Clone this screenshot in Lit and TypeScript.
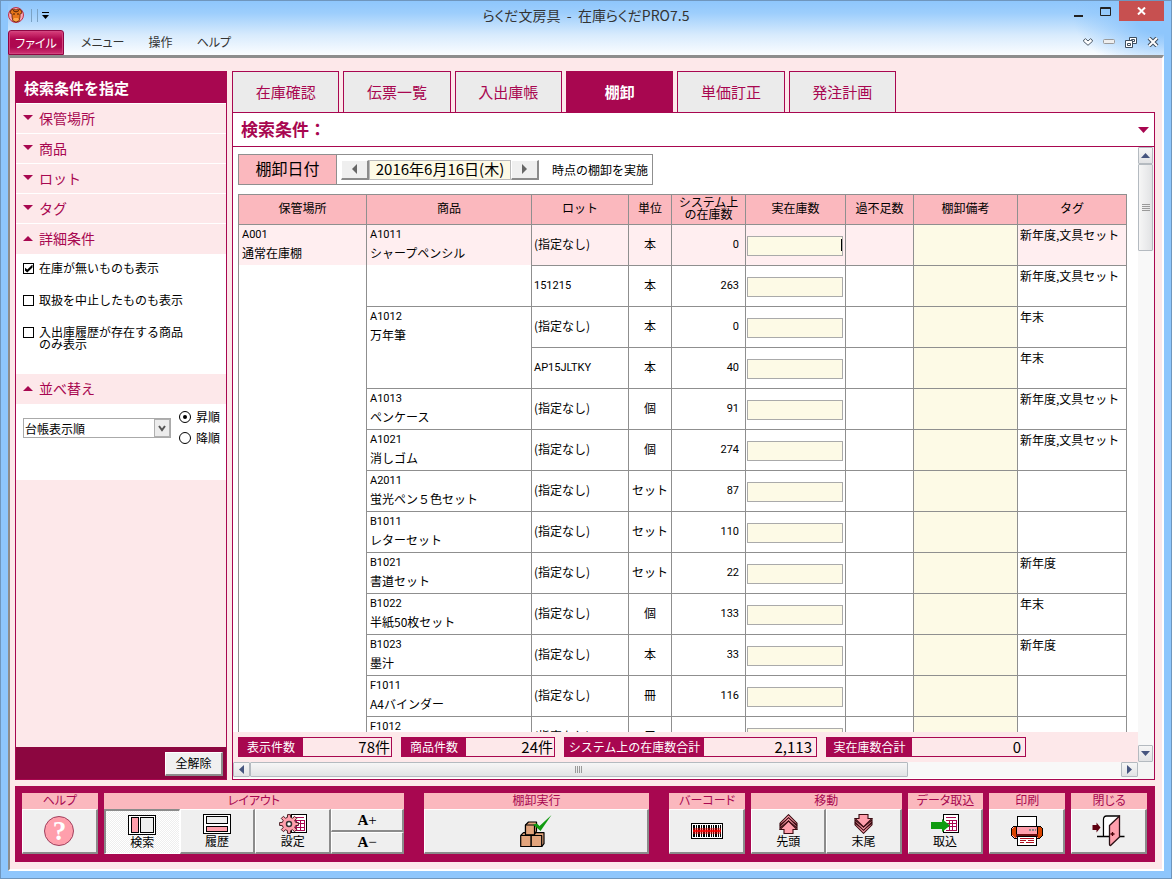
import { LitElement, html, css, svg, nothing } from "lit";
import { customElement, property } from "lit/decorators.js";
import { classMap } from "lit/directives/class-map.js";

interface StockRow { lot: string; unit: string; system: string; tag: string; }
interface Product { code: string; name: string; rows: StockRow[]; }

const NO_LOT = "(指定なし)";
const SET_TAG = "新年度,文具セット";
const one = (code: string, name: string, unit: string, system: string, tag = ""): Product =>
  ({ code, name, rows: [{ lot: NO_LOT, unit, system, tag }] });

const PRODUCTS: Product[] = [
  { code: "A1011", name: "シャープペンシル", rows: [
    { lot: NO_LOT, unit: "本", system: "0", tag: SET_TAG },
    { lot: "151215", unit: "本", system: "263", tag: SET_TAG } ] },
  { code: "A1012", name: "万年筆", rows: [
    { lot: NO_LOT, unit: "本", system: "0", tag: "年末" },
    { lot: "AP15JLTKY", unit: "本", system: "40", tag: "年末" } ] },
  one("A1013", "ペンケース", "個", "91", SET_TAG),
  one("A1021", "消しゴム", "個", "274", SET_TAG),
  one("A2011", "蛍光ペン５色セット", "セット", "87"),
  one("B1011", "レターセット", "セット", "110"),
  one("B1021", "書道セット", "セット", "22", "新年度"),
  one("B1022", "半紙50枚セット", "個", "133", "年末"),
  one("B1023", "墨汁", "本", "33", "新年度"),
  one("F1011", "A4バインダー", "冊", "116"),
  one("F1012", "", "冊", ""),
];

const reset = css`
  :host, * { box-sizing: border-box; }
  button, input, select { font: inherit; color: inherit; margin: 0; padding: 0; border: 0; border-radius: 0; background: none; }
  button { cursor: pointer; }
  svg { display: block; flex: none; }
`;

/* ---------- icons ---------- */
const gearPath = (() => {
  const teeth = 8, pts: string[] = [];
  const at = (r: number, turn: number) => {
    const a = turn * Math.PI * 2 / teeth;
    pts.push(`${(10 + r * Math.cos(a)).toFixed(2)} ${(10 + r * Math.sin(a)).toFixed(2)}`);
  };
  for (let i = 0; i < teeth; i++) { at(6.8, i - 0.3); at(9.5, i - 0.2); at(9.5, i + 0.2); at(6.8, i + 0.3); }
  return `M${pts.join("L")}z`;
})();
const icons: Record<string, unknown> = {
  search: svg`<svg width="28" height="20" viewBox="0 0 28 20" shape-rendering="crispEdges">
    <rect x=".5" y=".5" width="27" height="19" fill="#fff" stroke="#000"/>
    <rect x="3.5" y="2.5" width="7" height="15" fill="#ff9fac" stroke="#000"/>
    <rect x="12.5" y="2.5" width="13" height="15" fill="#efefef" stroke="#000"/></svg>`,
  history: svg`<svg width="28" height="20" viewBox="0 0 28 20" shape-rendering="crispEdges">
    <rect x=".5" y=".5" width="27" height="19" fill="#fff" stroke="#000"/>
    <rect x="3.5" y="2.5" width="21" height="7" fill="#efefef" stroke="#000"/>
    <rect x="3.5" y="12.5" width="21" height="5" fill="#ff9fac" stroke="#000"/></svg>`,
  settings: svg`<svg width="28" height="20" viewBox="0 0 28 20">
    <g shape-rendering="crispEdges"><rect x="12.5" y=".5" width="15" height="18" fill="#fff" stroke="#000"/>
    <path d="M14 3.5h11M14 6.5h11v10h-11M14 9.5h11M14 13.5h11M17.5 6v11M21.5 6v11" fill="none" stroke="#a80750"/></g>
    <path d=${gearPath} fill="#ff9fac" stroke="#4a1c22"/>
    <circle cx="10" cy="10" r="2.5" fill="#fff" stroke="#333" stroke-width="1.500"/></svg>`,
  boxes: svg`<svg width="32" height="32" viewBox="0 0 32 32">
    <g fill="#e2a47c" stroke="#000" stroke-width="1.200" stroke-linejoin="round">
    <path d="M.7 20.500l2.800-2.800h20.500v11l-2.300 2.800"/>
    <rect x=".7" y="20.500" width="10.500" height="11"/><rect x="11.200" y="20.500" width="10.500" height="11"/>
    <path d="M5.500 10l3-3h8v9l-2 3.500h-9z"/><rect x="5.500" y="10" width="9" height="9.800"/></g>
    <path d="M13 9.500l4-1 2.500 2.500 12-11-11 16z" fill="#109b10"/></svg>`,
  barcode: svg`<svg width="32" height="16" viewBox="0 0 32 16" shape-rendering="crispEdges">
    <rect x=".5" y=".5" width="31" height="15" fill="#fff" stroke="#000"/>
    <path d="M2 2h2v12h-2zM5 2h1v12h-1zM7 2h2v12h-2zM10 2h1v12h-1zM12 2h2v12h-2zM15 2h1v12h-1zM17 2h2v12h-2zM20 2h1v12h-1zM22 2h1v12h-1zM24 2h2v12h-2zM27 2h1v12h-1zM29 2h1v12h-1z"/>
    <rect x="2" y="5" width="28" height="6" fill="#f00" opacity=".45"/><rect x="2" y="7" width="28" height="2" fill="#f00" opacity=".8"/></svg>`,
  first: svg`<svg width="19" height="20" viewBox="0 0 19 20"><g fill="#ff9fac" stroke="#3a0a10" stroke-width="1.100">
    <path d="M9.500.7L18 9.200v1.800L9.500 4.500 1 11v-1.800z"/><path d="M9.500 3.700L18 12v2L9.500 7 1 14v-2z"/>
    <path d="M9.500 7L18 15.500h-4v4h-9v-4h-4z"/></g></svg>`,
  last: svg`<svg width="19" height="20" viewBox="0 0 19 20"><g fill="#ff9fac" stroke="#3a0a10" stroke-width="1.100">
    <path d="M9.500 19.300L18 10.800v-1.800L9.500 15.500 1 9v1.800z"/><path d="M9.500 16.300L18 8v-2L9.500 13 1 6v2z"/>
    <path d="M9.500 13L18 4.500h-4v-4h-9v4h-4z"/></g></svg>`,
  load: svg`<svg width="28" height="20" viewBox="0 0 28 20" shape-rendering="crispEdges">
    <rect x="12.500" y=".5" width="15" height="18" fill="#fff" stroke="#000"/>
    <path d="M15 3.500h10M15 6.500h10v9.500h-10M15 9.500h10M15 12.500h10M18.500 6v10M21.500 6v10" fill="none" stroke="#a80750"/>
    <path d="M0 8h11v-3l8 6.500-8 6.500v-3h-11z" fill="#109b10" shape-rendering="auto"/></svg>`,
  print: svg`<svg width="32" height="30" viewBox="0 0 32 30" shape-rendering="crispEdges">
    <path d="M6.500 10.500v-10h19v10z" fill="#fff" stroke="#000"/>
    <path d="M2.500 10.500h27l2 2v7l-3 3h-25l-3-3v-7z" fill="#ff9fac" stroke="#000"/>
    <path d="M1 13l2-2h2v11h-1l-3-3zM31 13l-2-2h-2v11h1l3-3z" fill="#d94400"/>
    <path d="M5.500 11v10M26.500 11v10" stroke="#000"/><path d="M18 13.500h2M21 13.500h2M24 13.500h1" stroke="#888" stroke-width="2"/>
    <path d="M5 18h22v3h-22z" fill="#6b0d10"/>
    <path d="M6.500 20.500h19v9h-19z" fill="#fff" stroke="#000"/>
    <path d="M9 22.500h14M9 24.500h6M17 24.500h6M9 26.500h4M15 26.500h8" stroke="#b01020"/></svg>`,
  door: svg`<svg width="33" height="32" viewBox="0 0 33 32">
    <path d="M11.500 22V4.500q0-3.500 3-3.500h13" fill="#fff" stroke="#000" stroke-width="1.300"/>
    <path d="M12.500 4.500q0-2.500 2-2.500h11l-7.500 8v12h-5.500z" fill="#fff"/>
    <path d="M5 21.500h13M27 21.500h5.500" stroke="#000" stroke-width="1.300"/>
    <path d="M17.500 10.500L27.500 1v21L18.500 30.500q-1 0-1-1z" fill="#ff9fac" stroke="#2a1014" stroke-width="1.300"/>
    <path d="M20.500 17v4M18.500 19h4" stroke="#4a0008" stroke-width="1.300"/>
    <path d="M.5 10h4V7.500l4 5-4 5V15h-4z" fill="#5e0010"/></svg>`,
  mascot: svg`<svg width="16" height="16" viewBox="0 0 16 16">
    <circle cx="8" cy="8" r="7.500" fill="#f9a8b4" stroke="#c0304a"/>
    <path d="M3 3l3-1 2 1 2-1 3 1 1 3-2 1v3l-1 4-3 1-3-1-1-4V7L2 6z" fill="#e8761a" stroke="#5a2206" stroke-width=".8"/>
    <path d="M5 3.500l3 1.500 3-1.500M5 7h2M9 7h2" fill="none" stroke="#4a1a04"/><path d="M6 11h4l1 2-3 1.500-3-1.500z" fill="#ffa64a"/></svg>`,
};

const tri = (dir: "up" | "down" | "left" | "right", w: number, h: number, fill: string) => {
  const d = { up: `M0 ${h}L${w / 2} 0L${w} ${h}z`, down: `M0 0H${w}L${w / 2} ${h}z`,
    left: `M${w} 0V${h}L0 ${h / 2}z`, right: `M0 0L${w} ${h / 2}L0 ${h}z` }[dir];
  return html`<svg width=${w} height=${h} viewBox="0 0 ${w} ${h}"><path d=${d} fill=${fill}></path></svg>`;
};

/* ---------- title bar and menu ---------- */
@customElement("title-bar")
class TitleBar extends LitElement {
  static styles = [reset, css`
    :host { display: block; color: #333; }
    .title { display: grid; grid-template-columns: 1fr auto 1fr; height: 28px; }
    .quick { display: flex; align-items: center; gap: 3px; }
    .bars { width: 7px; height: 13px; border: solid #7ba2c4; border-width: 0 1px; margin: 0 1px 0 4px; }
    .more { display: flex; flex-direction: column; gap: 2px; align-items: center; border-top: 1px solid #000; padding-top: 2px; width: 7px; }
    .name { margin: 0; padding-top: 2px; font-size: 14px; font-weight: 400; line-height: 24px; font-feature-settings: "palt"; white-space: pre; }
    .win { display: flex; justify-content: flex-end; align-items: flex-start; }
    .win button { display: grid; place-items: center; width: 27px; height: 20px; }
    .win .close { width: 45px; background: #c75050; }
    .menu { display: flex; align-items: stretch; height: 26px; font-size: 12px; }
    .menu button { font-feature-settings: "palt"; line-height: 24px; padding: 0 12px; }
    .menu .file { color: #fff; width: 56px; padding: 0; height: 25px; margin-top: 1px; border: 1px solid #8f0543; border-radius: 3px 3px 0 0;
      background: linear-gradient(#d8407c, #b0084f 35%, #ad0850 70%, #cf3373); box-shadow: inset 0 0 0 1px #d2457f; }
    .menu nav { display: flex; padding-left: 5px; }
    .mdi { margin-left: auto; display: flex; align-items: center; gap: 10px; padding-right: 5px; }
    .mdi button { padding: 0; }
  `];
  render() {
    return html`
      <div class="title">
        <div class="quick">${icons.mascot}<span class="bars"></span><button class="more" aria-label="クイックアクセス">${tri("down", 7, 4, "#000")}</button></div>
        <h1 class="name">らくだ文房具  -  在庫らくだPRO7.5</h1>
        <div class="win">
          <button aria-label="最小化"><svg width="9" height="11"><path d="M0 9h9v2H0z" fill="#222"/></svg></button>
          <button aria-label="最大化"><svg width="11" height="9"><path d="M.5.5h10v8H.5zM0 1.500h11" fill="none" stroke="#222"/></svg></button>
          <button class="close" aria-label="閉じる"><svg width="9" height="8"><path d="M1 .5l7 7M8 .5l-7 7" stroke="#fff" stroke-width="2"/></svg></button>
        </div>
      </div>
      <div class="menu">
        <button class="file">ファイル</button>
        <nav><button>メニュー</button><button>操作</button><button>ヘルプ</button></nav>
        <div class="mdi">
          <button aria-label="リボン"><svg width="10" height="8"><path d="M.7 2L2.500.700 5 3 7.500.700 9.300 2v1.500L5 7.300.700 3.500z" fill="#fff" stroke="#4d5a68"/></svg></button>
          <button aria-label="ウィンドウ最小化"><svg width="12" height="6"><rect x=".5" y=".5" width="11" height="4" rx="1" fill="#eee" stroke="#999"/></svg></button>
          <button aria-label="元に戻す"><svg width="12" height="11"><path d="M4.500.500h7v6h-7zM6.500 2.500h3v2h-3z" fill="#fff" stroke="#3f4e5e"/><path d="M.500 3.500h7v7h-7zM2.500 6.500h3v2h-3z" fill="#fff" stroke="#3f4e5e"/></svg></button>
          <button aria-label="ウィンドウを閉じる"><svg width="12" height="10"><path d="M2 1l8 8M10 1l-8 8" stroke="#3f4e5e" stroke-width="4"/><path d="M2 1l8 8M10 1l-8 8" stroke="#fff" stroke-width="2"/></svg></button>
        </div>
      </div>`;
  }
}

/* ---------- search conditions ---------- */
@customElement("search-panel")
class SearchPanel extends LitElement {
  static styles = [reset, css`
    :host { display: flex; flex-direction: column; border: 1px solid #a80750; background: #fde8ea; font-size: 12px; }
    h2 { margin: 0; padding-left: 8px; background: #a80750; color: #fff; font-size: 15px; line-height: 31px; }
    .head { display: flex; align-items: center; gap: 6px; width: 100%; height: 30px; padding: 0 0 2px 7px; border-top: 1px solid #fff; color: #a80750; font-size: 14px; line-height: 20px; }
    .head[aria-expanded="true"] { height: 31px; }
    .block { background: #fff; padding: 0 6px 0 7px; }
    .checks { display: flex; flex-direction: column; gap: 19px; height: 119px; padding-top: 7px; }
    .checks label { display: flex; align-items: flex-start; gap: 5px; line-height: 12px; }
    .checks span { padding-top: 1px; }
    .checks input { appearance: none; flex: none; display: grid; width: 11px; height: 11px; margin-top: 2px; border: 1px solid #000; background: #fff; }
    .checks input:checked::after { content: ""; width: 8px; height: 8px; background: #000; place-self: center;
      clip-path: polygon(0 35%, 35% 62%, 100% 0, 100% 38%, 35% 100%, 0 72%); }
    .sort { display: flex; gap: 8px; height: 76px; padding-top: 4px; }
    .pick { position: relative; flex: 1; height: 20px; margin-top: 10px; }
    .pick select { appearance: none; width: 100%; height: 20px; border: 1px solid #aaa; background: #fff; padding-left: 1px; }
    .drop { position: absolute; top: 1px; right: 1px; bottom: 1px; width: 16px; display: grid; place-items: center; border: 1px solid #b0b0b0; background: #ececec; pointer-events: none; }
    .order { display: flex; flex-direction: column; gap: 3px; border: 0; margin: 0; padding: 0; width: 41px; }
    .order label { display: flex; align-items: center; gap: 5px; line-height: 18px; white-space: nowrap; }
    .order input { appearance: none; flex: none; display: grid; width: 12px; height: 12px; border: 1px solid #000; border-radius: 6px; }
    .order input:checked::after { content: ""; width: 4px; height: 4px; border-radius: 2px; background: #000; place-self: center; }
    .foot { margin-top: auto; background: #8c0640; display: flex; justify-content: flex-end; padding: 5px 3px 3px; }
    .clear { width: 58px; height: 24px; padding-bottom: 2px; line-height: 18px; background: #f0f0f0; border: 1px solid #fff; border-right: 2px solid #8b8b8b; border-bottom: 2px solid #8b8b8b; }
  `];
  render() {
    const head = (name: string, open = false) => html`<button class="head" aria-expanded=${open}>${tri(open ? "up" : "down", 10, 5, "#a80750")}${name}</button>`;
    return html`
      <h2>検索条件を指定</h2>
      ${head("保管場所")}${head("商品")}${head("ロット")}${head("タグ")}${head("詳細条件", true)}
      <div class="block checks">
        <label><input type="checkbox" checked><span>在庫が無いものも表示</span></label>
        <label><input type="checkbox"><span>取扱を中止したものも表示</span></label>
        <label><input type="checkbox"><span>入出庫履歴が存在する商品<br>のみ表示</span></label>
      </div>
      ${head("並べ替え", true)}
      <div class="block sort">
        <div class="pick"><select aria-label="並べ替え"><option>台帳表示順</option></select>
          <span class="drop"><svg width="8" height="7"><path d="M1 1l3 4 3-4" fill="none" stroke="#555" stroke-width="2"/></svg></span></div>
        <fieldset class="order">
          <label><input type="radio" name="order" checked>昇順</label>
          <label><input type="radio" name="order">降順</label>
        </fieldset>
      </div>
      <div class="foot"><button class="clear">全解除</button></div>`;
  }
}

/* ---------- scroll bars ---------- */
@customElement("scroll-rail")
class ScrollRail extends LitElement {
  @property({ type: Boolean, reflect: true }) vertical = false;
  @property({ type: Number }) share = 50;
  static styles = [reset, css`
    :host { display: flex; height: 16px; background: #f8f8f8; }
    :host([vertical]) { flex-direction: column; width: 16px; height: auto; }
    .track { flex: 1; display: flex; }
    :host([vertical]) .track { flex-direction: column; }
    .step, .thumb { display: grid; place-items: center; border: 1px solid #b4bac0; border-radius: 1px; background: linear-gradient(#f6f6f6, #e2e3e5); }
    .step { flex: none; width: 17px; height: 15px; }
    :host([vertical]) .step { width: 15px; height: 17px; }
    .thumb { height: 15px; }
    :host([vertical]) .thumb { width: 15px; height: auto; background: linear-gradient(90deg, #f6f6f6, #e2e3e5); }
  `];
  render() {
    const v = this.vertical;
    return html`
      <button class="step" aria-label=${v ? "上へ" : "左へ"}>${v ? tri("up", 9, 5, "#46557f") : tri("left", 5, 9, "#46557f")}</button>
      <div class="track"><div class="thumb" style="flex-basis:${this.share}%">
        ${v ? html`<svg width="8" height="7"><path d="M0 .500h8M0 2.500h8M0 4.500h8M0 6.500h8" stroke="#9a9a9a"/></svg>`
            : html`<svg width="7" height="7"><path d="M.500 0v7M2.500 0v7M4.500 0v7M6.500 0v7" stroke="#9a9a9a"/></svg>`}
      </div></div>
      <button class="step" aria-label=${v ? "下へ" : "右へ"}>${v ? tri("down", 9, 5, "#46557f") : tri("right", 5, 9, "#46557f")}</button>`;
  }
}

/* ---------- stock table ---------- */
@customElement("stock-table")
class StockTable extends LitElement {
  static styles = [reset, css`
    :host { display: block; }
    table { border-collapse: collapse; table-layout: fixed; width: 888px; font-size: 12px; }
    th, td { border: 1px solid #8f8f8f; padding: 0 0 2px; line-height: 16px; }
    th { height: 30px; padding-bottom: 3px; background: #fbb8be; font-weight: 400; line-height: 12px; }
    tbody tr { height: 41px; }
    .top { vertical-align: top; padding: 0; background: #fff; }
    .lines { height: 40px; padding: 1px 0 0 3px; line-height: 18px; white-space: nowrap; }
    .lines span { display: block; }
    .now { background: #ffeef0; }
    .tag { vertical-align: top; padding: 1px 0 0 2px; line-height: 18px; white-space: nowrap; }
    .lot { padding-left: 2px; }
    .unit { text-align: center; }
    .num { text-align: right; padding: 0 6px 0 0; }
    .num, .code { font-family: Roboto, sans-serif; font-size: 11px; }
    .memo { background: #fdfae6; }
    .field { position: relative; margin: 3px 2px 0 1px; }
    .field input { display: block; width: 100%; height: 20px; border: 1px solid #aaa; background: #fdfae6; text-align: right; }
    .caret { position: absolute; right: 1px; top: 3px; width: 1px; height: 12px; background: #000; }
  `];
  render() {
    const cols = [128, 165, 97, 43, 74, 100, 68, 104, 109];
    const total = PRODUCTS.reduce((n, p) => n + p.rows.length, 0);
    let line = 0;
    return html`<table>
      <colgroup>${cols.map(w => html`<col style="width:${w}px">`)}</colgroup>
      <thead><tr><th>保管場所</th><th>商品</th><th>ロット</th><th>単位</th><th>システム上<br>の在庫数</th><th>実在庫数</th><th>過不足数</th><th>棚卸備考</th><th>タグ</th></tr></thead>
      <tbody>${PRODUCTS.map(p => p.rows.map((r, i) => {
        const first = line++ === 0;
        const lines = classMap({ lines: true, now: first });
        return html`<tr class=${classMap({ now: first })}>
          ${first ? html`<td class="top" rowspan=${total}><div class=${lines}><span class="code">A001</span><span>通常在庫棚</span></div></td>` : nothing}
          ${i === 0 ? html`<td class="top" rowspan=${p.rows.length}><div class=${lines}><span class="code">${p.code}</span><span>${p.name}</span></div></td>` : nothing}
          <td class="lot"><span class=${classMap({ code: r.lot !== NO_LOT })}>${r.lot}</span></td>
          <td class="unit">${r.unit}</td>
          <td class="num">${r.system}</td>
          <td><div class="field"><input aria-label="実在庫数 ${p.code}">${first ? html`<span class="caret"></span>` : nothing}</div></td>
          <td></td><td class="memo"></td><td class="tag">${r.tag}</td></tr>`;
      }))}</tbody></table>`;
  }
}

/* ---------- bottom tool bar ---------- */
@customElement("tool-bar")
class ToolBar extends LitElement {
  static styles = [reset, css`
    :host { display: grid; grid-template-columns: 76fr 301fr 254fr 76fr 151fr 76fr 76fr 76fr; gap: 6px; padding: 7px 8px 8px 7px; background: #a80750; font-size: 12px; }
    section { display: flex; flex-direction: column; min-width: 0; }
    .run { margin: 0 14px; }
    h3 { margin: 0; background: #fbb8be; color: #a80750; font-size: 12px; font-weight: 400; line-height: 14px; height: 16px; text-align: center; font-feature-settings: "palt"; white-space: nowrap; }
    .row { display: flex; height: 45px; }
    .row > * { flex: 1; min-width: 0; }
    button { display: flex; flex-direction: column; align-items: center; justify-content: center; line-height: 14px; color: #000;
      background: #efefef; border: 1px solid #fff; border-right: 2px solid #8b8b8b; border-bottom: 2px solid #8b8b8b; }
    .pressed { background: repeating-conic-gradient(#fff 0 25%, #eee 0 50%) 0 0 / 2px 2px; border: 1px solid #fff; border-top: 2px solid #8b8b8b; border-left: 2px solid #8b8b8b; }
    .stack { display: flex; flex-direction: column; }
    .stack button { flex: 1; }
    .big { font-family: "Liberation Serif", serif; font-size: 15px; font-weight: 700; line-height: 16px; }
    .big span { font-weight: 400; }
    .ask { display: grid; place-items: center; width: 30px; height: 30px; border-radius: 15px; border: 1px solid #a0405e; background: #ff9fac; color: #fff; font: 700 27px/28px "Liberation Serif", serif; }
  `];
  render() {
    return html`
      <section><h3>ヘルプ</h3><div class="row"><button aria-label="ヘルプ"><span class="ask">?</span></button></div></section>
      <section><h3>レイアウト</h3><div class="row">
        <button class="pressed" aria-pressed="true">${icons.search}検索</button>
        <button>${icons.history}履歴</button>
        <button>${icons.settings}設定</button>
        <div class="stack"><button class="big"><div>A<span>+</span></div></button><button class="big"><div>A<span>−</span></div></button></div>
      </div></section>
      <section class="run"><h3>棚卸実行</h3><div class="row"><button aria-label="棚卸実行">${icons.boxes}</button></div></section>
      <section><h3>バーコード</h3><div class="row"><button aria-label="バーコード">${icons.barcode}</button></div></section>
      <section><h3>移動</h3><div class="row"><button>${icons.first}先頭</button><button>${icons.last}末尾</button></div></section>
      <section><h3>データ取込</h3><div class="row"><button>${icons.load}取込</button></div></section>
      <section><h3>印刷</h3><div class="row"><button aria-label="印刷">${icons.print}</button></div></section>
      <section><h3>閉じる</h3><div class="row"><button aria-label="閉じる">${icons.door}</button></div></section>`;
  }
}

@customElement("app-root")
class AppRoot extends LitElement {
  static styles = [reset, css`
    :host { display: flex; flex-direction: column; height: 100vh; overflow: hidden; border: 1px solid #6f96bd; padding: 0 7px 7px; color: #000;
      font-family: "Noto Sans CJK JP", sans-serif; font-size: 12px;
      background: linear-gradient(90deg, #8ec6fc 7px, transparent 7px, transparent calc(100% - 7px), #8ec6fc calc(100% - 7px)),
        radial-gradient(90px 54px at calc(100% - 8px) 16px, #8ec6fc 30%, transparent) no-repeat 0 0 / 100% 54px,
        linear-gradient(#8ec6fc, #9dcefc 12px, #d8ebfd 34px, #fbfdff 54px) no-repeat 0 0 / 100% 54px, #8ec6fc; }
    title-bar { flex: none; height: 54px; }
    .body { flex: 1; min-height: 0; display: flex; flex-direction: column; gap: 6px; padding: 13px 7px 7px 5px; background: #fde8ea;
      border-style: solid; border-width: 3px 2px 2px; border-color: #8d8d8d #fff #fff #8d8d8d; }
    .cols { flex: 1; min-height: 0; display: flex; gap: 5px; }
    search-panel { width: 212px; flex: none; }
    .main { flex: 1; min-width: 0; display: flex; flex-direction: column; }
    .tabs { display: grid; grid-template-columns: repeat(6, 1fr); gap: 4px; width: 664px; max-width: 100%; height: 41px; }
    .tabs button { border: 1px solid #a80750; border-bottom: 0; background: #ebebeb; color: #a80750; font-size: 15px; line-height: 40px; }
    .tabs .on { background: #a80750; color: #fff; font-weight: 700; }
    .panel { flex: 1; min-height: 0; display: grid; grid-template: 34px 1fr 30px 17px / 1fr 16px; border: 1px solid #a80750; background: #fff; }
    .cond { grid-column: 1 / 3; display: flex; align-items: center; justify-content: space-between; padding: 0 5px 0 8px; border-bottom: 1px solid #a80750; color: #a80750; }
    .cond h2 { margin: 0; padding-bottom: 2px; font-size: 17px; line-height: 30px; }
    .sheet { grid-column: 1; min-height: 0; overflow: hidden; padding: 7px 0 0 5px; }
    .bar { display: flex; width: fit-content; height: 31px; margin-bottom: 9px; border: 1px solid #8f8f8f; }
    .bar .lead { width: 98px; border-right: 1px solid #8f8f8f; background: #fbb8be; font-size: 16px; line-height: 26px; text-align: center; }
    .pickdate { display: flex; align-items: center; padding: 0 13px 0 4px; }
    .pickdate button { display: grid; place-items: center; width: 28px; height: 20px; background: #efefef; border: 1px solid #fff; border-right: 2px solid #8b8b8b; border-bottom: 2px solid #8b8b8b; }
    .pickdate input { width: 142px; height: 20px; padding-bottom: 2px; border: 1px solid #bbb; background: #fdfae6; font-size: 15px; text-align: center; }
    .bar p { margin: 0; padding-right: 4px; line-height: 29px; }
    .vbar { grid-column: 2; grid-row: 2 / 4; }
    .sums { grid-column: 1; display: flex; align-items: center; gap: 9px; margin: 0; padding: 0 5px; background: #fde8ea; min-width: 0; }
    .sum { display: flex; height: 20px; border: 1px solid #a80750; }
    .sum dt { background: #a80750; color: #fff; line-height: 17px; text-align: center; }
    .sum dd { margin: 0; font-size: 15px; line-height: 18px; text-align: right; padding-right: 3px; }
    .n1 dt { width: 64px; } .n1 dd { width: 88px; padding-right: 1px; }
    .n2 dt { width: 139px; } .n2 dd { width: 112px; padding-right: 4px; }
    .n3 dt { width: 85px; } .n3 dd { width: 113px; padding-right: 4px; }
    .hbar { grid-column: 1; }
    .corner { background: #f4f4f4; }
    tool-bar { flex: none; }
  `];
  render() {
    const tabs = ["在庫確認", "伝票一覧", "入出庫帳", "棚卸", "単価訂正", "発注計画"];
    const sums = [["表示件数", "78件", "n1"], ["商品件数", "24件", "n1"], ["システム上の在庫数合計", "2,113", "n2"], ["実在庫数合計", "0", "n3"]];
    return html`
      <title-bar></title-bar>
      <div class="body">
        <div class="cols">
          <search-panel></search-panel>
          <main class="main">
            <div class="tabs">${tabs.map(t => html`<button class=${classMap({ on: t === "棚卸" })}>${t}</button>`)}</div>
            <div class="panel">
              <div class="cond"><h2>検索条件：</h2>${tri("down", 11, 6, "#a80750")}</div>
              <div class="sheet">
                <div class="bar">
                  <label class="lead" for="date">棚卸日付</label>
                  <div class="pickdate">
                    <button aria-label="前の日">${tri("left", 5, 10, "#666")}</button>
                    <input id="date" value="2016年6月16日(木)">
                    <button aria-label="次の日">${tri("right", 5, 10, "#666")}</button>
                  </div>
                  <p>時点の棚卸を実施</p>
                </div>
                <stock-table></stock-table>
              </div>
              <scroll-rail class="vbar" vertical .share=${15}></scroll-rail>
              <dl class="sums">${sums.map(([k, v, c]) => html`<div class="sum ${c}"><dt>${k}</dt><dd>${v}</dd></div>`)}</dl>
              <scroll-rail class="hbar" .share=${75.5}></scroll-rail>
              <div class="corner"></div>
            </div>
          </main>
        </div>
        <tool-bar></tool-bar>
      </div>`;
  }
}
